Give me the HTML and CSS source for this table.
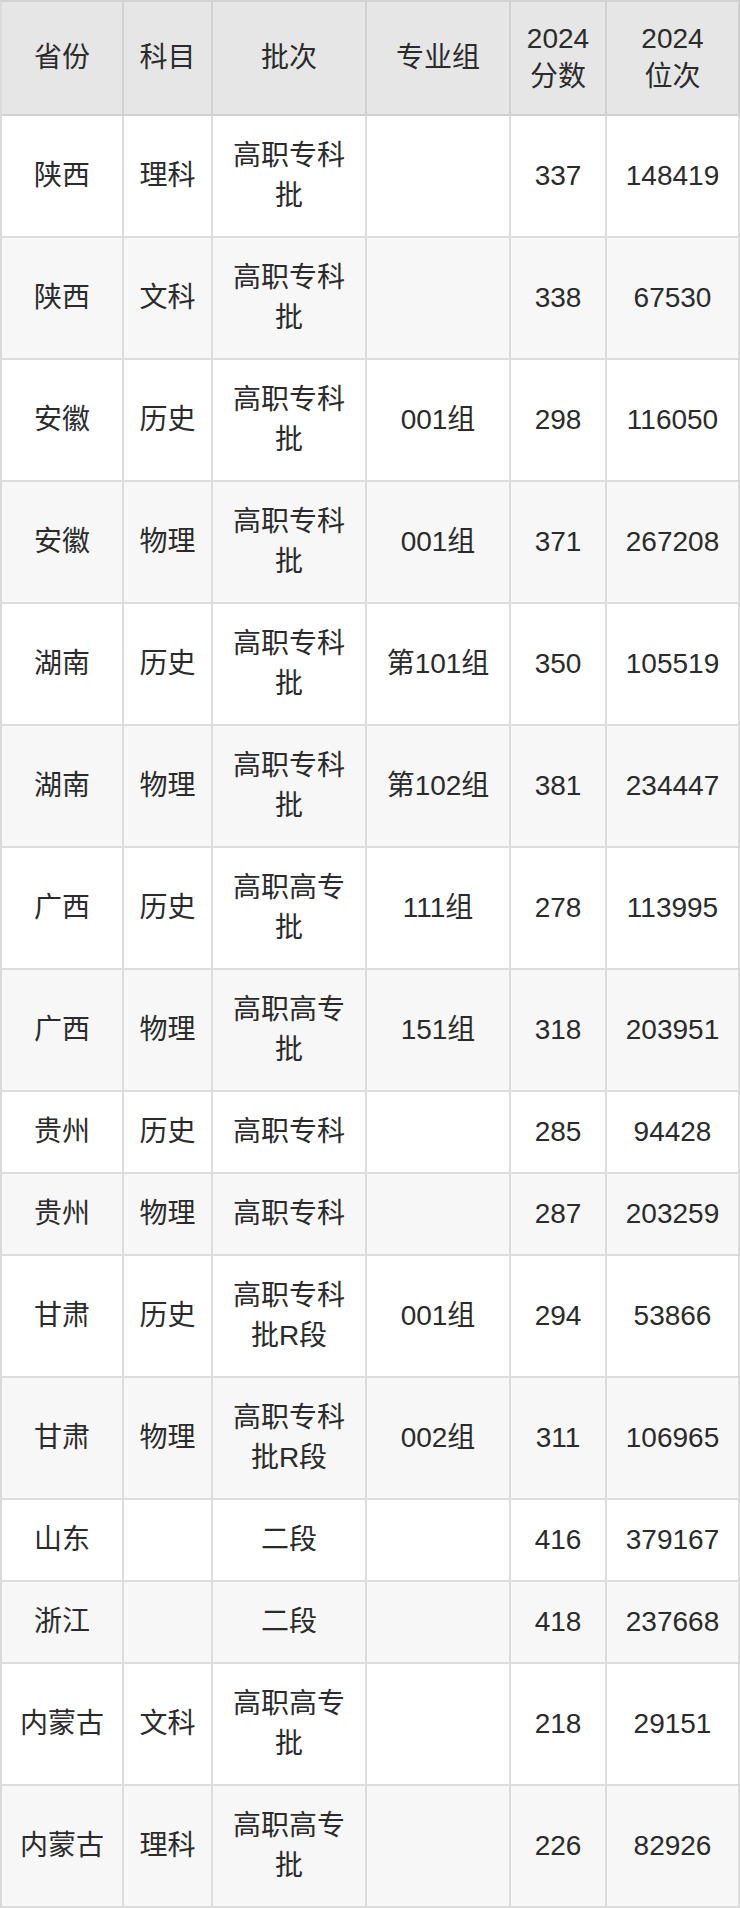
FILE: index.html
```html
<!DOCTYPE html>
<html lang="zh-CN">
<head>
<meta charset="utf-8">
<title>2024 录取分数</title>
<link rel="stylesheet" href="styles.css">
</head>
<body>
<div class="table">
  <div class="row head">
    <div class="cell">省份</div><div class="cell">科目</div><div class="cell">批次</div><div class="cell">专业组</div><div class="cell"><span>2024<br>分数</span></div><div class="cell"><span>2024<br>位次</span></div>
  </div>
  <div class="row">
    <div class="cell">陕西</div><div class="cell">理科</div><div class="cell">高职专科批</div><div class="cell"></div><div class="cell">337</div><div class="cell">148419</div>
  </div>
  <div class="row alt">
    <div class="cell">陕西</div><div class="cell">文科</div><div class="cell">高职专科批</div><div class="cell"></div><div class="cell">338</div><div class="cell">67530</div>
  </div>
  <div class="row">
    <div class="cell">安徽</div><div class="cell">历史</div><div class="cell">高职专科批</div><div class="cell">001组</div><div class="cell">298</div><div class="cell">116050</div>
  </div>
  <div class="row alt">
    <div class="cell">安徽</div><div class="cell">物理</div><div class="cell">高职专科批</div><div class="cell">001组</div><div class="cell">371</div><div class="cell">267208</div>
  </div>
  <div class="row">
    <div class="cell">湖南</div><div class="cell">历史</div><div class="cell">高职专科批</div><div class="cell">第101组</div><div class="cell">350</div><div class="cell">105519</div>
  </div>
  <div class="row alt">
    <div class="cell">湖南</div><div class="cell">物理</div><div class="cell">高职专科批</div><div class="cell">第102组</div><div class="cell">381</div><div class="cell">234447</div>
  </div>
  <div class="row">
    <div class="cell">广西</div><div class="cell">历史</div><div class="cell">高职高专批</div><div class="cell">111组</div><div class="cell">278</div><div class="cell">113995</div>
  </div>
  <div class="row alt">
    <div class="cell">广西</div><div class="cell">物理</div><div class="cell">高职高专批</div><div class="cell">151组</div><div class="cell">318</div><div class="cell">203951</div>
  </div>
  <div class="row">
    <div class="cell">贵州</div><div class="cell">历史</div><div class="cell">高职专科</div><div class="cell"></div><div class="cell">285</div><div class="cell">94428</div>
  </div>
  <div class="row alt">
    <div class="cell">贵州</div><div class="cell">物理</div><div class="cell">高职专科</div><div class="cell"></div><div class="cell">287</div><div class="cell">203259</div>
  </div>
  <div class="row">
    <div class="cell">甘肃</div><div class="cell">历史</div><div class="cell">高职专科批R段</div><div class="cell">001组</div><div class="cell">294</div><div class="cell">53866</div>
  </div>
  <div class="row alt">
    <div class="cell">甘肃</div><div class="cell">物理</div><div class="cell">高职专科批R段</div><div class="cell">002组</div><div class="cell">311</div><div class="cell">106965</div>
  </div>
  <div class="row">
    <div class="cell">山东</div><div class="cell"></div><div class="cell">二段</div><div class="cell"></div><div class="cell">416</div><div class="cell">379167</div>
  </div>
  <div class="row alt">
    <div class="cell">浙江</div><div class="cell"></div><div class="cell">二段</div><div class="cell"></div><div class="cell">418</div><div class="cell">237668</div>
  </div>
  <div class="row">
    <div class="cell">内蒙古</div><div class="cell">文科</div><div class="cell">高职高专批</div><div class="cell"></div><div class="cell">218</div><div class="cell">29151</div>
  </div>
  <div class="row alt">
    <div class="cell">内蒙古</div><div class="cell">理科</div><div class="cell">高职高专批</div><div class="cell"></div><div class="cell">226</div><div class="cell">82926</div>
  </div>
</div>
</body>
</html>
```

FILE: styles.css
```css
html, body {
  margin: 0;
  padding: 0;
  background: #ffffff;
}

.table {
  display: grid;
  grid-template-columns: 122px 89px 154px 144px 96px 133px;
  width: 740px;
  box-sizing: border-box;
  border-left: 2px solid #dadada;
  border-top: 2px solid #d2d2d2;
  font-family: "Liberation Sans", "Noto Sans CJK SC", sans-serif;
  font-size: 28px;
  color: #2b2b2b;
}

.row {
  display: contents;
}

.cell {
  display: flex;
  align-items: center;
  justify-content: center;
  text-align: center;
  box-sizing: border-box;
  padding: 20px 10px;
  line-height: 40px;
  border-right: 2px solid #dddddd;
  border-bottom: 2px solid #dddddd;
  background: #ffffff;
}

.row.alt .cell {
  background: #f7f7f7;
}

.row.head .cell {
  background: #e6e6e6;
  padding: 18px 10px;
  line-height: 38px;
  border-right-color: #d2d2d2;
  border-bottom-color: #d2d2d2;
}
```
